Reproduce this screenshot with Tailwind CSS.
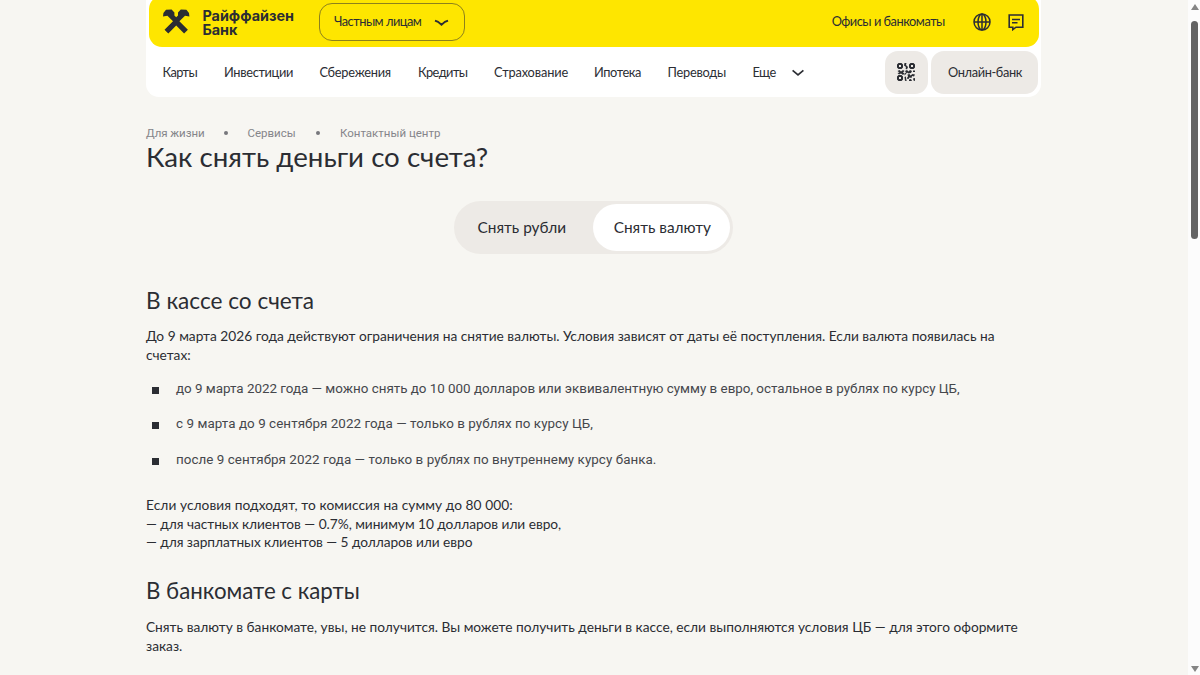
<!DOCTYPE html>
<html lang="ru">
<head>
    <meta charset="utf-8">
    <meta name="viewport" content="width=device-width, initial-scale=1">
    <title>Как снять деньги со счета?</title>
    <script src="https://cdn.jsdelivr.net/npm/@tailwindcss/browser@4"></script>
</head>
<body class="flex h-screen overflow-hidden bg-[#f7f6f2] font-['Lato',sans-serif] text-[#2b2d33] whitespace-nowrap">
    <div class="flex-1 pl-[146px]">
        <!-- Header -->
        <header class="w-[895px] h-[97px] bg-white rounded-b-[13px] px-[3px] overflow-hidden">
            <!-- Top bar -->
            <div class="-mt-1 h-[51px] w-[889.5px] ml-[0.4px] pt-1 bg-[#fee600] rounded-[13px] flex items-start">
                <a href="#" class="flex ml-[13px]">
                    <svg class="w-[28px] h-[28px] mt-2" viewBox="0 0 28 28" fill="#2b2d33">
                        <path d="M1 8.4L1.4 5L4 1.8L9.6 1.4L12.4 4.4V7.4L14.2 9.2L16 7.4V4.4L18.8 1.4L24.4 1.8L27 5L27.4 8.4L23 7.8L17.4 13.3L25.9 21.8L22.1 25.6L14.2 17.4L6.3 25.6L2.5 21.8L11 13.3L5.4 7.8Z"/>
                    </svg>
                    <span class="ml-3 mt-[8.5px] font-[Inter] font-bold text-[14.4px] leading-[14px]">
                        <span class="block">Райффайзен</span>
                        <span class="block">Банк</span>
                    </span>
                </a>
                <button class="ml-[25.5px] mt-[3px] w-[146px] h-[38px] border border-[#8d811c] rounded-[13px] flex items-center pl-[13.5px] text-[12.8px] tracking-[-0.5px]">
                    <span class="-mt-px">Частным лицам</span>
                    <svg class="w-[15px] h-[8px] ml-[12.5px] mt-[2px]" viewBox="0 0 15 8" fill="none" stroke="#2b2d33" stroke-width="1.8">
                        <path d="M1 1.6L4 2.8L7.5 5.8L11 2.8L14 1.6"/>
                    </svg>
                </button>
                <a href="#" class="ml-auto mt-[13px] text-[12.8px] leading-[17px] tracking-[-0.48px]">Офисы и банкоматы</a>
                <svg class="w-[18px] h-[18px] ml-[28px] mt-[13px]" viewBox="0 0 18 18" fill="none" stroke="#2b2d33" stroke-width="1.5">
                    <circle cx="9" cy="9" r="8"/>
                    <ellipse cx="9" cy="9" rx="4" ry="8"/>
                    <path d="M9 1V17M1 9H17"/>
                </svg>
                <svg class="w-[16px] h-[18px] ml-[17px] mr-[15px] mt-[13px]" viewBox="0 0 16 18" fill="none" stroke="#2b2d33" stroke-width="1.6">
                    <path d="M1.2 2H14.8V14.2H8L4.8 16.6V14.2H1.2ZM4 6.5H12M4 9.8H9.5"/>
                </svg>
            </div>
            <!-- Sections -->
            <nav class="flex items-center h-[50px] pl-[13.5px] text-[12.8px] leading-4">
                <a href="#" class="w-[61.5px] tracking-[-0.6px]">Карты</a>
                <a href="#" class="w-[95.5px] tracking-[-0.34px]">Инвестиции</a>
                <a href="#" class="w-[98.5px] tracking-[-0.25px]">Сбережения</a>
                <a href="#" class="w-[76px] tracking-[-0.55px]">Кредиты</a>
                <a href="#" class="w-[100px] tracking-[-0.15px]">Страхование</a>
                <a href="#" class="w-[73.5px] tracking-[-0.4px]">Ипотека</a>
                <a href="#" class="w-[85px] tracking-[-0.25px]">Переводы</a>
                <a href="#" class="w-[23px] -mt-px tracking-[-0.6px]">Еще</a>
                <svg class="w-[12px] h-[8px] ml-4 mt-px" viewBox="0 0 12 8" fill="none" stroke="#2b2d33" stroke-width="1.7">
                    <path d="M0.6 1.4L6 5.8L11.4 1.4"/>
                </svg>
                <button class="ml-auto w-[43px] h-[43px] bg-[#edeae6] rounded-[13px] flex items-center justify-center">
                    <svg class="w-[18px] h-[18px]" viewBox="0 0 18 18" fill="#2b2d33">
                        <path fill-rule="evenodd" d="M1.5 0H4.5L6 1.5V4.5L4.5 6H1.5L0 4.5V1.5ZM2 2V4H4V2ZM13.5 0H16.5L18 1.5V4.5L16.5 6H13.5L12 4.5V1.5ZM14 2V4H16V2ZM1.5 12H4.5L6 13.5V16.5L4.5 18H1.5L0 16.5V13.5ZM2 14V16H4V14Z"/>
                        <path d="M7.5 0L9.5 0L9 2L11 4L10 6.5L8.5 5.5L9 4L7 2.5ZM0.5 8L2.5 7L4 8.5L6 7L7.5 8L6 9.5L7.5 10.5L6 12L4 10.5L2 11.5L0.5 10L2.5 9.5ZM8 8L10 7L11.5 8.5L13 7L15 8L14 10L11.5 10.5L10 9.5L9 11L7.5 12.5L7.5 10.8L9 9.5ZM16 7.5H18V9H16ZM10.5 11.5L12.5 11L13.5 12.5L15.5 11L18 11.5L17 13.5L15 13L14.5 15L12.5 14.5L11.5 16L9.5 15.5L11 13.5ZM7.5 14L9 13.5L9 16L10 17.5L8 18ZM12 16.5L14 16L15 18H12ZM16 15.5L18 15V18L16.5 17.5Z"/>
                    </svg>
                </button>
                <button class="ml-[3.5px] w-[107px] h-[43px] bg-[#edeae6] rounded-[13px] pl-px tracking-[-0.37px]">Онлайн-банк</button>
            </nav>
        </header>

        <main>
            <!-- Breadcrumbs -->
            <div class="flex items-center mt-[28px] h-[17px] font-[Roboto] text-[11.5px] text-[#85858a]">
                <a href="#" class="w-[58px] tracking-[-0.05px]">Для жизни</a>
                <i class="w-1 h-1 rounded-full bg-[#77777c] ml-[20px] mr-[19.5px] -mt-px"></i>
                <a href="#" class="w-[49px]">Сервисы</a>
                <i class="w-1 h-1 rounded-full bg-[#77777c] ml-[19.5px] mr-[20px] -mt-px"></i>
                <a href="#">Контактный центр</a>
            </div>
            <h1 class="text-[27.7px] leading-8 -mt-px">Как снять деньги со счета?</h1>

            <!-- Currency switch -->
            <div class="flex w-[279px] h-[53px] ml-[308.4px] mt-7 p-[3px] bg-[#edeae6] rounded-full text-[15.4px]">
                <button class="w-[136px] pr-[7px]">Снять рубли</button>
                <button class="w-[137px] bg-white rounded-full pl-px">Снять валюту</button>
            </div>

            <section class="mt-[31px] text-[13.72px] leading-[18.6px]">
                <h2 class="text-[22.6px] leading-8">В кассе со счета</h2>
                <p class="mt-[10px]">До 9 марта 2026 года действуют ограничения на снятие валюты. Условия зависят от даты её поступления. Если валюта появилась на<br>счетах:</p>
                <ul class="mt-4 font-[Roboto] text-[13.4px] text-[#45474c]">
                    <li class="flex items-center h-[35.3px] -mt-px pb-4 tracking-[-0.01px]"><i class="w-[7px] h-[7px] bg-[#2b2d33] ml-[6px] mr-[17px] mt-[3px]"></i>до 9 марта 2022 года — можно снять до 10 000 долларов или эквивалентную сумму в евро, остальное в рублях по курсу ЦБ,</li>
                    <li class="flex items-center h-[35.3px] pb-4 tracking-[0.06px]"><i class="w-[7px] h-[7px] bg-[#2b2d33] ml-[6px] mr-[17px] mt-[3px]"></i>с 9 марта до 9 сентября 2022 года — только в рублях по курсу ЦБ,</li>
                    <li class="flex items-center h-[36px] pb-[15px] tracking-[0.05px]"><i class="w-[7px] h-[7px] bg-[#2b2d33] ml-[6px] mr-[17px] mt-[2px]"></i>после 9 сентября 2022 года — только в рублях по внутреннему курсу банка.</li>
                </ul>
                <p class="mt-[10.5px]"><span class="tracking-[0.07px]">Если условия подходят, то комиссия на сумму до 80 000:</span><br><span class="tracking-[-0.04px]">— для частных клиентов — 0.7%, минимум 10 долларов или евро,</span><br><span class="tracking-[-0.06px]">— для зарплатных клиентов — 5 долларов или евро</span></p>
            </section>

            <section class="mt-[23px] text-[13.72px] leading-[18.6px]">
                <h2 class="text-[22.3px] leading-8">В банкомате с карты</h2>
                <p class="mt-[11px]">Снять валюту в банкомате, увы, не получится. Вы можете получить деньги в кассе, если выполняются условия ЦБ — для этого оформите<br>заказ.</p>
            </section>
        </main>
    </div>

    <!-- Scrollbar -->
    <div class="w-[12px] bg-[#fcfcfc] flex flex-col items-center pl-px">
        <svg class="w-2 h-[6px] mt-1" viewBox="0 0 8 6" fill="#858585"><path d="M4 0L8 6H0Z"/></svg>
        <div class="w-[7px] h-[218px] mt-[10.5px] rounded-full bg-[#636363]"></div>
        <svg class="w-2 h-[6px] mt-auto mb-[3px]" viewBox="0 0 8 6" fill="#858585"><path d="M0 0H8L4 6Z"/></svg>
    </div>
</body>
</html>
